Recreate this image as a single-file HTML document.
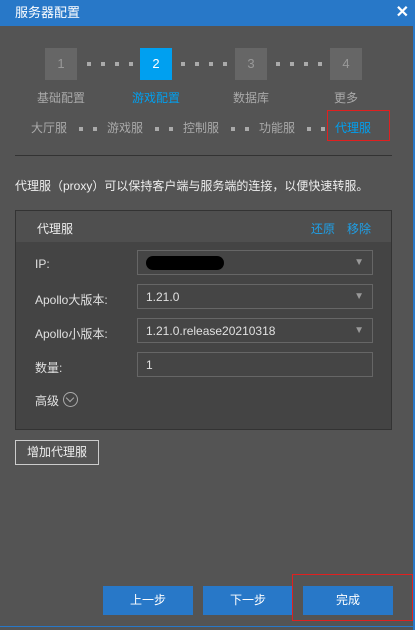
<!DOCTYPE html>
<html><head><meta charset="utf-8"><style>
*{margin:0;padding:0;box-sizing:border-box}
body{width:415px;height:630px;background:#545454;font-family:"Liberation Sans","Microsoft YaHei","Noto Sans CJK SC",sans-serif;font-size:12px;color:#ddd;position:relative;overflow:hidden}
.a{position:absolute}
.title{left:0;top:0;width:415px;height:26px;background:#2878c8;color:#fff;font-size:13px;line-height:26px;padding-left:15px}
.x{right:6px;top:0;color:#fff;font-size:16px;font-weight:bold;line-height:26px}
.step{width:32px;height:32px;background:#666;color:#999;text-align:center;line-height:32px;font-size:13px;top:48px}
.dot{width:4px;height:4px;background:#aaa;top:62px}
.lbl{top:89px;color:#aaa;font-size:12px;text-align:center;width:80px}
.tab{top:119px;color:#aaa;font-size:12px}
.sd{width:4px;height:4px;background:#aaa;top:127px}
.sel{left:137px;width:236px;height:25px;border:1px solid #666;background:#454545;color:#e0e0e0;padding-left:8px;line-height:24px;font-size:12px}
.sel .tri{position:absolute;right:8px;top:0;color:#999;font-size:10px}
.rl{left:35px;color:#e0e0e0;font-size:12px}
.btn{top:586px;width:90px;height:29px;background:#2878c8;color:#fff;text-align:center;line-height:29px;font-size:12px}
</style></head><body>
<div class="a title">服务器配置</div><div class="a x">✕</div>
<div class="a" style="right:0;top:26px;width:2px;height:604px;background:#2878c8"></div>
<div class="a" style="left:0;top:626px;width:415px;height:1px;background:#2878c8"></div>

<div class="a step" style="left:45px">1</div>
<div class="a step" style="left:140px;background:#00a0f0;color:#fff">2</div>
<div class="a step" style="left:235px">3</div>
<div class="a step" style="left:330px">4</div>
<div class="a dot" style="left:87px"></div><div class="a dot" style="left:101px"></div><div class="a dot" style="left:115px"></div><div class="a dot" style="left:129px"></div>
<div class="a dot" style="left:181px"></div><div class="a dot" style="left:195px"></div><div class="a dot" style="left:209px"></div><div class="a dot" style="left:223px"></div>
<div class="a dot" style="left:276px"></div><div class="a dot" style="left:290px"></div><div class="a dot" style="left:304px"></div><div class="a dot" style="left:318px"></div>
<div class="a lbl" style="left:21px">基础配置</div>
<div class="a lbl" style="left:116px;color:#00a0f0">游戏配置</div>
<div class="a lbl" style="left:211px">数据库</div>
<div class="a lbl" style="left:306px">更多</div>

<div class="a tab" style="left:31px">大厅服</div>
<div class="a sd" style="left:79px"></div><div class="a sd" style="left:93px"></div>
<div class="a tab" style="left:107px">游戏服</div>
<div class="a sd" style="left:155px"></div><div class="a sd" style="left:169px"></div>
<div class="a tab" style="left:183px">控制服</div>
<div class="a sd" style="left:231px"></div><div class="a sd" style="left:245px"></div>
<div class="a tab" style="left:259px">功能服</div>
<div class="a sd" style="left:307px"></div><div class="a sd" style="left:321px"></div>
<div class="a tab" style="left:335px;color:#00a0f0">代理服</div>
<div class="a" style="left:327px;top:110px;width:63px;height:31px;border:1px solid #e02020"></div>
<div class="a" style="left:15px;top:155px;width:377px;height:1px;background:#333"></div>

<div class="a" style="left:15px;top:177px;color:#eee">代理服（proxy）可以保持客户端与服务端的连接，以便快速转服。</div>

<div class="a" style="left:15px;top:210px;width:377px;height:220px;border:1px solid #333;background:#444"></div>
<div class="a" style="left:16px;top:211px;width:375px;height:31px;background:#4f4f4f"></div>
<div class="a" style="left:37px;top:220px;color:#eee">代理服</div>
<div class="a" style="left:311px;top:220px;color:#1ea0e8">还原</div>
<div class="a" style="left:347px;top:220px;color:#1ea0e8">移除</div>

<div class="a rl" style="top:257px">IP:</div>
<div class="a sel" style="top:250px"><span style="display:inline-block;width:78px;height:14px;background:#000;border-radius:7px;margin-top:5px"></span><span class="tri">▼</span></div>
<div class="a rl" style="top:291px">Apollo大版本:</div>
<div class="a sel" style="top:284px">1.21.0<span class="tri">▼</span></div>
<div class="a rl" style="top:325px">Apollo小版本:</div>
<div class="a sel" style="top:318px">1.21.0.release20210318<span class="tri">▼</span></div>
<div class="a rl" style="top:359px">数量:</div>
<div class="a sel" style="top:352px">1</div>
<div class="a rl" style="top:392px">高级</div>
<div class="a" style="left:63px;top:392px;width:15px;height:15px;border:1px solid #aaa;border-radius:50%"></div>
<div class="a" style="left:67px;top:395px;width:6px;height:6px;border-right:1px solid #aaa;border-bottom:1px solid #aaa;transform:rotate(45deg)"></div>

<div class="a" style="left:15px;top:440px;width:84px;height:25px;border:1px solid #ccc;color:#eee;text-align:center;line-height:23px">增加代理服</div>

<div class="a btn" style="left:103px">上一步</div>
<div class="a btn" style="left:203px">下一步</div>
<div class="a btn" style="left:303px">完成</div>
<div class="a" style="left:292px;top:574px;width:121px;height:47px;border:1px solid #e02020"></div>
</body></html>
